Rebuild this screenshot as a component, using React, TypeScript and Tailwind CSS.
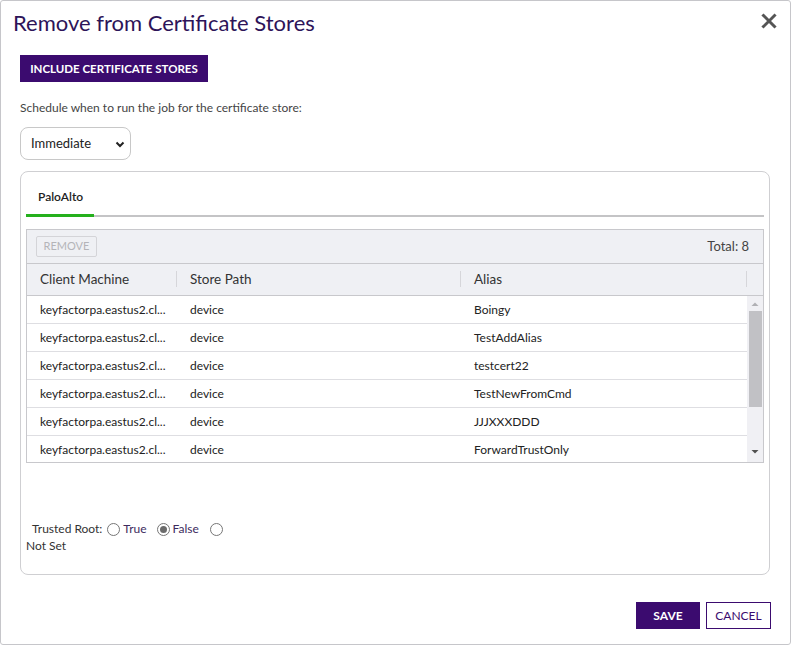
const rows = [
  { machine: "keyfactorpa.eastus2.cl...", path: "device", alias: "Boingy" },
  { machine: "keyfactorpa.eastus2.cl...", path: "device", alias: "TestAddAlias" },
  { machine: "keyfactorpa.eastus2.cl...", path: "device", alias: "testcert22" },
  { machine: "keyfactorpa.eastus2.cl...", path: "device", alias: "TestNewFromCmd" },
  { machine: "keyfactorpa.eastus2.cl...", path: "device", alias: "JJJXXXDDD" },
  { machine: "keyfactorpa.eastus2.cl...", path: "device", alias: "ForwardTrustOnly" },
];

const Radio = ({ checked }: { checked?: boolean }) => (
  <span className="inline-flex size-[13px] items-center justify-center rounded-full border border-[#767676] bg-white">
    {checked && <span className="size-[7px] rounded-full bg-[#6b6b6b]" />}
  </span>
);

export default function App() {
  return (
    <div
      className="relative flex h-[645px] w-[791px] flex-col rounded-[3px] border border-[#c6c6ca] bg-white text-[#333]"
      style={{ fontFamily: "Lato, 'Open Sans', sans-serif" }}
    >
      {/* header */}
      <div className="flex items-start justify-between pl-[12px] pr-[13px] pt-[8px]">
        <h1 className="text-[22px] leading-[28px] text-[#2d1459]">Remove from Certificate Stores</h1>
        <svg width="16" height="16" viewBox="0 0 16 16" className="mt-[4px]">
          <path d="M2.5 2.5 L13.5 13.5 M13.5 2.5 L2.5 13.5" stroke="#555" strokeWidth="3" strokeLinecap="square" />
        </svg>
      </div>

      <div className="flex flex-col px-[19px]">
        <button className="mt-[18px] h-[27px] w-[188px] bg-[#3b0b6f] text-[11.5px] font-bold text-white">
          INCLUDE CERTIFICATE STORES
        </button>
        <p className="mt-[18px] text-[12px] leading-[15px] text-[#444]">
          Schedule when to run the job for the certificate store:
        </p>
        <div className="mt-[12px] flex h-[33px] w-[111px] items-center justify-between rounded-[8px] border border-[#c8c8c8] pl-[10px] pr-[4px] text-[13px] text-[#222]">
          <span>Immediate</span>
          <svg width="12" height="12" viewBox="0 0 12 12">
            <path d="M2.5 4.5 L6 8 L9.5 4.5" stroke="#222" strokeWidth="2" fill="none" />
          </svg>
        </div>

        {/* panel */}
        <div className="mt-[11px] flex h-[404px] w-[750px] flex-col rounded-[8px] border border-[#cfcfd2] px-[5px] pt-[16px]">
          <div className="flex border-b-2 border-[#c4c4c6]">
            <div className="relative w-[68px] pb-[9px] pl-[12px] text-[12px] font-semibold text-[#222]">
              PaloAlto
              <span className="absolute -bottom-[2px] left-0 h-[3px] w-[68px] bg-[#25b01d]" />
            </div>
          </div>

          {/* grid */}
          <div className="mt-[12px] flex h-[234px] w-[738px] flex-col border border-[#c8c8cc] bg-[#eff0f4]">
            <div className="flex h-[33px] items-center justify-between pl-[9px] pr-[14px]">
              <span className="flex h-[21px] w-[61px] items-center justify-center rounded-[2px] border border-[#d4d4d8] text-[11px] text-[#b4b4b8]">
                REMOVE
              </span>
              <span className="text-[13px] text-[#444]">Total: 8</span>
            </div>
            <div className="flex h-[34px] items-center border-y border-[#c8c8cc] text-[13.5px] text-[#333]">
              <div className="flex h-full w-[150px] items-center justify-between">
                <span className="pl-[13px]">Client Machine</span>
                <span className="h-[16px] w-px bg-[#d6d6da]" />
              </div>
              <div className="flex h-full w-[284px] items-center justify-between">
                <span className="pl-[13px]">Store Path</span>
                <span className="h-[16px] w-px bg-[#d6d6da]" />
              </div>
              <div className="flex h-full w-[286px] items-center justify-between">
                <span className="pl-[13px]">Alias</span>
                <span className="h-[16px] w-px bg-[#d6d6da]" />
              </div>
            </div>
            <div className="flex h-[166px]">
              <div className="flex-1 overflow-hidden bg-white text-[12px] text-[#222]">
                {rows.map((r, i) => (
                  <div key={i} className="flex h-[28px] shrink-0 items-center border-b border-[#dedee2]">
                    <div className="w-[150px] truncate pl-[13px]">{r.machine}</div>
                    <div className="w-[284px] pl-[13px]">{r.path}</div>
                    <div className="flex-1 pl-[13px]">{r.alias}</div>
                  </div>
                ))}
              </div>
              <div className="flex w-[16px] flex-col items-center bg-[#f0f0f4]">
                <svg width="10" height="10" viewBox="0 0 10 10" className="mt-[3px]">
                  <path d="M1.5 7 L5 3.5 L8.5 7 Z" fill="#b0b0b4" />
                </svg>
                <div className="mt-[2px] h-[96px] w-[13px] bg-[#c1c1c5]" />
                <div className="flex-1" />
                <svg width="10" height="10" viewBox="0 0 10 10" className="mb-[5px]">
                  <path d="M1.5 3 L5 6.5 L8.5 3 Z" fill="#505050" />
                </svg>
              </div>
            </div>
          </div>

          <div className="mt-[57px] flex w-[210px] flex-wrap items-center text-[12px] text-[#333]">
            <span className="pl-[6px]">Trusted Root:</span>
            <span className="ml-[5px] flex items-center gap-[3px] text-[#3d2b5e]">
              <Radio /> True
            </span>
            <span className="ml-[10px] flex items-center gap-[3px] text-[#3d2b5e]">
              <Radio checked /> False
            </span>
            <span className="ml-[11px] flex items-center">
              <Radio />
            </span>
            <span className="w-full leading-[16px]">Not Set</span>
          </div>
        </div>
      </div>

      <div className="mt-auto flex justify-end gap-[6px] pb-[15px] pr-[19px]">
        <button className="h-[27px] w-[64px] bg-[#3b0b6f] text-[12px] font-bold text-white">SAVE</button>
        <button className="h-[27px] w-[65px] border border-[#3b0b6f] bg-white text-[12px] text-[#3b0b6f]">
          CANCEL
        </button>
      </div>
    </div>
  );
}
